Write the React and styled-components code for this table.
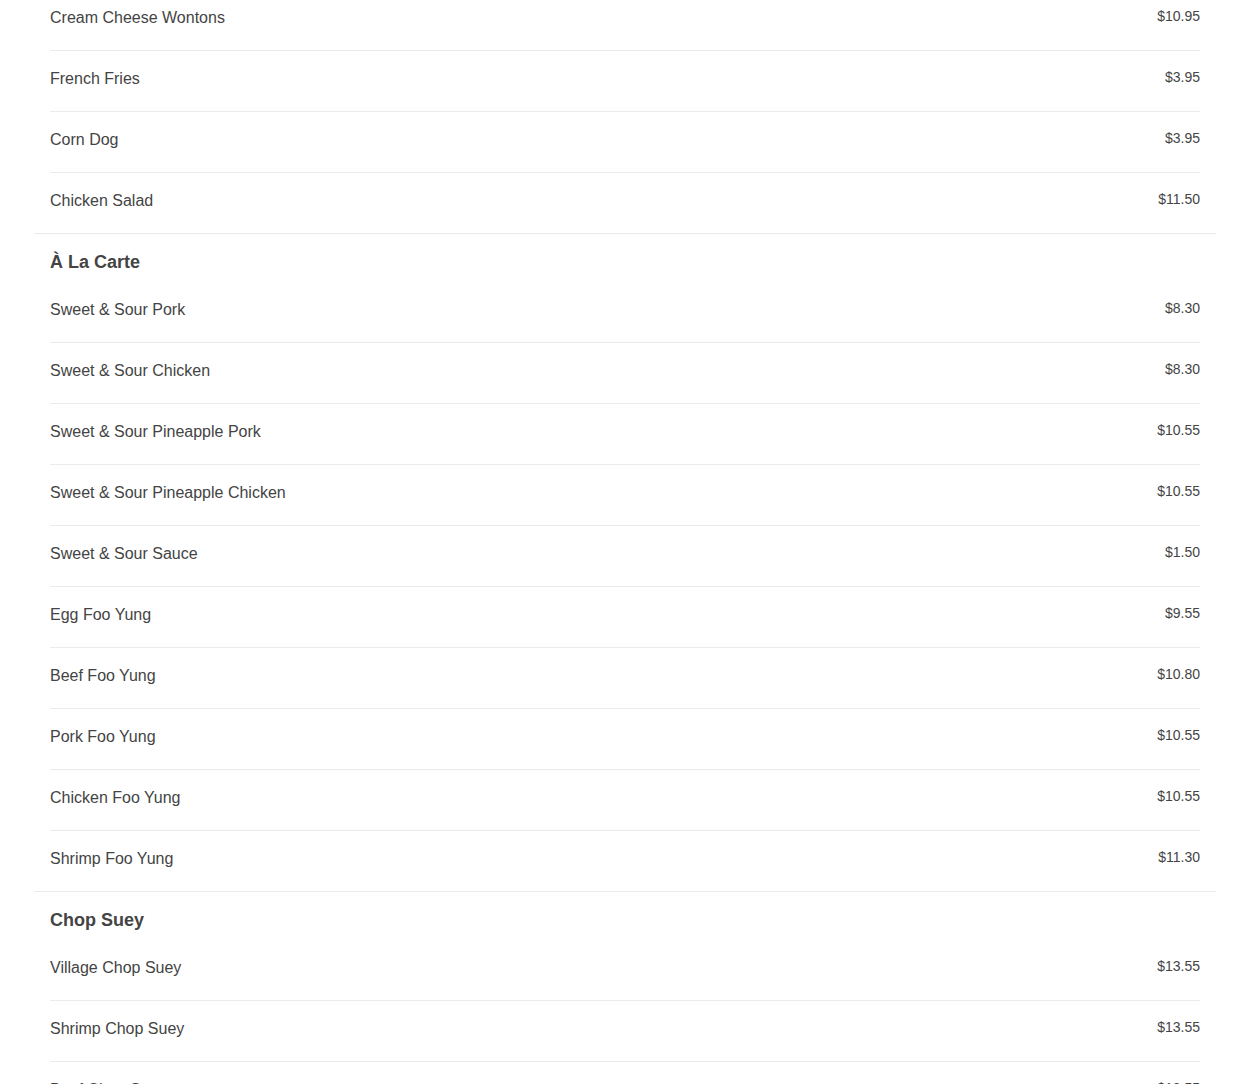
import React from "react";
import styled, { createGlobalStyle } from "styled-components";

const GlobalStyle = createGlobalStyle`
  html, body { margin: 0; padding: 0; background: #fff; }
  body { font-family: "Liberation Sans", Arial, sans-serif; color: #444; }
`;

const Page = styled.div`
  padding: 0 34px;
  margin-top: -10px;
`;

const Section = styled.section`
  padding: 0 16px;
  border-bottom: 1px solid #ebebeb;
  padding-top: ${(p) => (p.$title ? "17px" : "0")};
`;

const Heading = styled.h2`
  margin: 0 0 9px;
  font-size: 18px;
  line-height: 22px;
  font-weight: 700;
  color: #444;
`;

const List = styled.ul`
  list-style: none;
  margin: 0;
  padding: 0;
`;

const Row = styled.li`
  display: flex;
  justify-content: space-between;
  align-items: flex-start;
  padding: 16px 0 20px;
  border-bottom: 1px solid #ebebeb;
  &:last-child { border-bottom: none; }
`;

const Name = styled.span`
  font-size: 16px;
  line-height: 24px;
  color: #444;
`;

const Price = styled.span`
  font-size: 14px;
  line-height: 20px;
  color: #444;
`;

const sections = [
  {
    title: null,
    items: [
      ["Cream Cheese Wontons", "$10.95"],
      ["French Fries", "$3.95"],
      ["Corn Dog", "$3.95"],
      ["Chicken Salad", "$11.50"],
    ],
  },
  {
    title: "À La Carte",
    items: [
      ["Sweet & Sour Pork", "$8.30"],
      ["Sweet & Sour Chicken", "$8.30"],
      ["Sweet & Sour Pineapple Pork", "$10.55"],
      ["Sweet & Sour Pineapple Chicken", "$10.55"],
      ["Sweet & Sour Sauce", "$1.50"],
      ["Egg Foo Yung", "$9.55"],
      ["Beef Foo Yung", "$10.80"],
      ["Pork Foo Yung", "$10.55"],
      ["Chicken Foo Yung", "$10.55"],
      ["Shrimp Foo Yung", "$11.30"],
    ],
  },
  {
    title: "Chop Suey",
    items: [
      ["Village Chop Suey", "$13.55"],
      ["Shrimp Chop Suey", "$13.55"],
      ["Beef Chop Suey", "$13.55"],
      ["Chicken Chop Suey", "$13.55"],
    ],
  },
];

export default function App() {
  return (
    <>
      <GlobalStyle />
      <Page>
        {sections.map((s, i) => (
          <Section key={i} $title={!!s.title}>
            {s.title && <Heading>{s.title}</Heading>}
            <List>
              {s.items.map(([n, p]) => (
                <Row key={n}>
                  <Name>{n}</Name>
                  <Price>{p}</Price>
                </Row>
              ))}
            </List>
          </Section>
        ))}
      </Page>
    </>
  );
}
